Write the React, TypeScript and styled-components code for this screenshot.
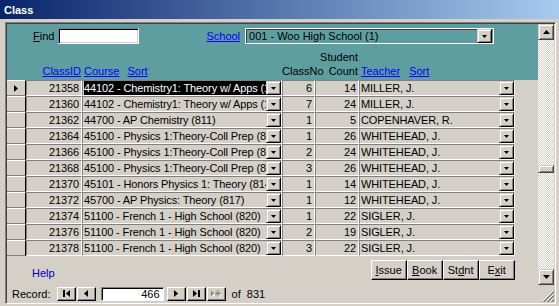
import React from 'react';
import styled, { createGlobalStyle } from 'styled-components';

const FACE = '#D4D0C8';
const SHADOW = '#808080';
const DARK = '#404040';
const TEAL = '#5F9EA0';
const LINK = '#0000FF';

const Global = createGlobalStyle`
  html, body { margin: 0; padding: 0; background: ${FACE}; }
  body { font-family: "Liberation Sans", Arial, sans-serif; font-size: 11px; color: #000; }
  * { box-sizing: border-box; }
`;

const Window = styled.div`
  width: 559px;
  height: 306px;
  background: ${FACE};
  display: flex;
  flex-direction: column;
  padding: 0 3px 2px 3px;
  overflow: hidden;
`;

const TitleBar = styled.div`
  height: 19px;
  background: linear-gradient(to right, #0A246A, #A6CAF0);
  color: #fff;
  font-weight: bold;
  font-size: 11px;
  display: flex;
  align-items: center;
  padding-left: 4px;
  margin: 0 -3px 0 -3px;
`;

const Client = styled.div`
  margin-top: 3px;
  margin-left: 2px;
  flex: 1;
  display: flex;
  flex-direction: column;
  border-top: 1px solid ${SHADOW};
  border-left: 1px solid ${SHADOW};
  border-bottom: 1px solid #fff;
  border-right: 1px solid #fff;
  box-shadow: inset 1px 1px 0 ${DARK}, inset -1px -1px 0 ${FACE};
  padding: 1px;
`;

const Main = styled.div`
  display: flex;
  height: 261px;
`;

const Form = styled.div`
  width: 531px;
  display: flex;
  flex-direction: column;
`;

const Header = styled.div`
  height: 56px;
  background: ${TEAL};
  display: flex;
  flex-direction: column;
`;

const TopRow = styled.div`
  display: flex;
  align-items: center;
  height: 16px;
  margin-top: 4px;
`;

const Label = styled.span<{ $ml?: number }>`
  margin-left: ${p => p.$ml ?? 0}px;
  white-space: nowrap;
`;

const Link = styled.span<{ $ml?: number }>`
  color: ${LINK};
  text-decoration: underline;
  margin-left: ${p => p.$ml ?? 0}px;
  white-space: nowrap;
`;

const FindBox = styled.div`
  width: 81px;
  height: 16px;
  margin-left: 4px;
  background: #fff;
  border-top: 1px solid ${SHADOW};
  border-left: 1px solid ${SHADOW};
  border-bottom: 1px solid #fff;
  border-right: 1px solid #fff;
  box-shadow: inset 1px 1px 0 #000, inset -1px -1px 0 ${FACE};
`;

const SchoolCombo = styled.div`
  width: 249px;
  height: 16px;
  margin-left: 5px;
  border: 1px solid #fff;
  box-shadow: inset 1px 1px 0 ${DARK};
  display: flex;
  align-items: center;
  padding: 0 1px 0 3px;
  white-space: nowrap;
`;

const ComboText = styled.span`
  flex: 1;
  overflow: hidden;
`;

const COLS = '19px 56px 200px 33px 44px 156px';

const LabelRow = styled.div`
  display: grid;
  grid-template-columns: ${COLS};
  align-items: end;
  margin-top: auto;
  padding-bottom: 2px;
  line-height: 14px;
`;

const HeadCell = styled.div<{ $right?: boolean; $gap?: number }>`
  display: flex;
  justify-content: ${p => (p.$right ? 'flex-end' : 'flex-start')};
  text-align: ${p => (p.$right ? 'right' : 'left')};
  gap: ${p => p.$gap ?? 0}px;
  padding: ${p => (p.$right ? '0 1px 0 0' : '0 0 0 2px')};
  white-space: nowrap;
`;

const ClassNoHead = styled(HeadCell)`
  direction: rtl;
  overflow: visible;
`;

const Detail = styled.div`
  display: flex;
  flex-direction: column;
`;

const Row = styled.div`
  display: grid;
  grid-template-columns: ${COLS};
  height: 16px;
  letter-spacing: -0.12px;
`;

const Selector = styled.div`
  height: 16px;
  background: ${FACE};
  border-top: 1px solid #fff;
  border-right: 1px solid #000;
  border-bottom: 1px solid ${SHADOW};
  display: flex;
  align-items: center;
  justify-content: center;
`;

const Cell = styled.div<{ $right?: boolean }>`
  height: 16px;
  background: ${FACE};
  border-top: 1px solid ${SHADOW};
  border-left: 1px solid ${SHADOW};
  border-bottom: 1px solid #fff;
  border-right: 1px solid #fff;
  display: flex;
  align-items: center;
  justify-content: ${p => (p.$right ? 'flex-end' : 'flex-start')};
  padding: ${p => (p.$right ? '0 2px 0 0' : '0 0 0 1px')};
  white-space: nowrap;
  overflow: hidden;
`;

const CellText = styled.span<{ $sel?: boolean }>`
  flex: 1;
  overflow: hidden;
  height: 14px;
  line-height: 14px;
  background: ${p => (p.$sel ? '#000' : 'transparent')};
  color: ${p => (p.$sel ? '#fff' : '#000')};
`;

const DropBtn = styled.div`
  width: 15px;
  height: 14px;
  flex: none;
  background: ${FACE};
  border-top: 1px solid ${FACE};
  border-left: 1px solid ${FACE};
  border-bottom: 1px solid #000;
  border-right: 1px solid #000;
  box-shadow: inset 1px 1px 0 #fff, inset -1px -1px 0 ${SHADOW};
  display: flex;
  align-items: center;
  justify-content: center;
`;

const Footer = styled.div`
  flex: 1;
  display: flex;
  align-items: flex-start;
`;

const Help = styled.span`
  color: #0000C0;
  margin: 11px 0 0 25px;
`;

const Buttons = styled.div`
  display: flex;
  margin: 4px 0 0 316px;
`;

const Btn = styled.div`
  width: 36px;
  height: 20px;
  background: ${FACE};
  border-top: 1px solid #fff;
  border-left: 1px solid #fff;
  border-bottom: 1px solid #000;
  border-right: 1px solid #000;
  box-shadow: inset -1px -1px 0 ${SHADOW};
  display: flex;
  align-items: center;
  justify-content: center;
  white-space: nowrap;
`;

const U = styled.span`
  text-decoration: underline;
`;

const VScroll = styled.div`
  width: 16px;
  display: flex;
  flex-direction: column;
  background-color: #fff;
  background-image: repeating-conic-gradient(${FACE} 0% 25%, #fff 0% 50%);
  background-size: 2px 2px;
`;

const ScrollBtn = styled.div`
  width: 16px;
  height: 16px;
  flex: none;
  background: ${FACE};
  border-top: 1px solid ${FACE};
  border-left: 1px solid ${FACE};
  border-bottom: 1px solid ${DARK};
  border-right: 1px solid ${DARK};
  box-shadow: inset 1px 1px 0 #fff, inset -1px -1px 0 ${SHADOW};
  display: flex;
  align-items: center;
  justify-content: center;
`;

const Thumb = styled.div`
  width: 16px;
  height: 8px;
  margin-top: 125px;
  margin-bottom: auto;
  background: ${FACE};
  border-top: 1px solid ${FACE};
  border-left: 1px solid ${FACE};
  border-bottom: 1px solid ${DARK};
  border-right: 1px solid ${DARK};
  box-shadow: inset 1px 1px 0 #fff, inset -1px -1px 0 ${SHADOW};
`;

const RecordBar = styled.div`
  height: 17px;
  display: flex;
  align-items: center;
  padding-left: 5px;
`;

const NavBtn = styled.div<{ $ml?: number }>`
  width: 19px;
  height: 14px;
  margin-left: ${p => p.$ml ?? 0}px;
  background: ${FACE};
  border-top: 1px solid #fff;
  border-left: 1px solid #fff;
  border-bottom: 1px solid #000;
  border-right: 1px solid #000;
  box-shadow: inset -1px -1px 0 ${SHADOW};
  display: flex;
  align-items: center;
  justify-content: center;
`;

const NavBox = styled.div`
  width: 63px;
  height: 14px;
  margin: 0 3px 0 5px;
  background: #fff;
  border-top: 1px solid ${SHADOW};
  border-left: 1px solid ${SHADOW};
  border-bottom: 1px solid #fff;
  border-right: 1px solid #fff;
  box-shadow: inset 1px 1px 0 #000;
  display: flex;
  align-items: center;
  justify-content: flex-end;
  padding-right: 3px;
`;

const Grip = styled.div`
  margin-left: auto;
  width: 16px;
  height: 17px;
  display: flex;
  align-items: flex-end;
  justify-content: flex-end;
`;

const Down = () => (
  <svg width="5" height="3" viewBox="0 0 5 3"><path d="M0 0h5L2.5 3z" fill="#000" /></svg>
);

const Arrow = ({ dir, color = '#000' }: { dir: 'up' | 'down' | 'left' | 'right'; color?: string }) => {
  const d = {
    up: 'M3.5 0L7 4H0z',
    down: 'M0 0h7L3.5 4z',
    left: 'M0 3.5L4 0v7z',
    right: 'M4 3.5L0 0v7z',
  }[dir];
  const vert = dir === 'up' || dir === 'down';
  const [w, h] = vert ? [7, 4] : [4, 7];
  return (
    <svg width={w} height={h} viewBox={`0 0 ${w} ${h}`}><path d={d} fill={color} /></svg>
  );
};

const First = () => (
  <svg width="7" height="7" viewBox="0 0 7 7"><rect x="0" y="0" width="2" height="7" fill="#000" /><path d="M3 3.5L7 0v7z" fill="#000" /></svg>
);
const Last = () => (
  <svg width="7" height="7" viewBox="0 0 7 7"><path d="M4 3.5L0 0v7z" fill="#000" /><rect x="5" y="0" width="2" height="7" fill="#000" /></svg>
);
const NewRec = () => (
  <svg width="11" height="8" viewBox="0 0 11 8">
    <path d="M4 4.5L1 1.5v6z" fill="#fff" />
    <path d="M3 3.5L0 0.5v6z" fill="#808080" />
    <g stroke="#fff" strokeWidth="1"><path d="M8 1v7M5 4.5h6M6 2.5l4 4M10 2.5l-4 4" /></g>
    <g stroke="#808080" strokeWidth="1"><path d="M7 0v7M4 3.5h6M5 1.5l4 4M9 1.5l-4 4" /></g>
  </svg>
);

const GripIcon = () => (
  <svg width="12" height="12" viewBox="0 0 12 12">
    <g strokeWidth="1">
      <path d="M11 1L1 11" stroke="#fff" />
      <path d="M12 1L1 12M12 2L2 12" stroke="#808080" />
      <path d="M11 5L5 11" stroke="#fff" />
      <path d="M12 5L5 12M12 6L6 12" stroke="#808080" />
      <path d="M11 9L9 11" stroke="#fff" />
      <path d="M12 9L9 12M12 10L10 12" stroke="#808080" />
    </g>
  </svg>
);

type Rec = { id: number; course: string; no: number; count: number; teacher: string };

const rows: Rec[] = [
  { id: 21358, course: '44102 - Chemistry1: Theory w/ Apps (1', no: 6, count: 14, teacher: 'MILLER, J.' },
  { id: 21360, course: '44102 - Chemistry1: Theory w/ Apps (1', no: 7, count: 24, teacher: 'MILLER, J.' },
  { id: 21362, course: '44700 - AP Chemistry (811)', no: 1, count: 5, teacher: 'COPENHAVER, R.' },
  { id: 21364, course: '45100 - Physics 1:Theory-Coll Prep (813)', no: 1, count: 26, teacher: 'WHITEHEAD, J.' },
  { id: 21366, course: '45100 - Physics 1:Theory-Coll Prep (813)', no: 2, count: 24, teacher: 'WHITEHEAD, J.' },
  { id: 21368, course: '45100 - Physics 1:Theory-Coll Prep (813)', no: 3, count: 26, teacher: 'WHITEHEAD, J.' },
  { id: 21370, course: '45101 - Honors Physics 1:  Theory (814)', no: 1, count: 14, teacher: 'WHITEHEAD, J.' },
  { id: 21372, course: '45700 - AP Physics: Theory (817)', no: 1, count: 12, teacher: 'WHITEHEAD, J.' },
  { id: 21374, course: '51100 - French 1 - High School (820)', no: 1, count: 22, teacher: 'SIGLER, J.' },
  { id: 21376, course: '51100 - French 1 - High School (820)', no: 2, count: 19, teacher: 'SIGLER, J.' },
  { id: 21378, course: '51100 - French 1 - High School (820)', no: 3, count: 22, teacher: 'SIGLER, J.' },
];

export default function App() {
  return (
    <>
      <Global />
      <Window>
        <TitleBar>Class</TitleBar>
        <Client>
          <Main>
            <Form>
              <Header>
                <TopRow>
                  <Label $ml={26}><U>F</U>ind</Label>
                  <FindBox />
                  <Link $ml={67}>School</Link>
                  <SchoolCombo>
                    <ComboText>001 - Woo High School (1)</ComboText>
                    <DropBtn><Down /></DropBtn>
                  </SchoolCombo>
                </TopRow>
                <LabelRow>
                  <div />
                  <HeadCell $right><Link>ClassID</Link></HeadCell>
                  <HeadCell $gap={8}><Link>Course</Link><Link>Sort</Link></HeadCell>
                  <ClassNoHead $right><span>ClassNo</span></ClassNoHead>
                  <HeadCell $right><span>Student<br />Count</span></HeadCell>
                  <HeadCell $gap={9}><Link>Teacher</Link><Link>Sort</Link></HeadCell>
                </LabelRow>
              </Header>
              <Detail>
                {rows.map((r, i) => (
                  <Row key={r.id}>
                    <Selector>{i === 0 && <Arrow dir="right" />}</Selector>
                    <Cell $right>{r.id}</Cell>
                    <Cell>
                      <CellText $sel={i === 0}>{r.course}</CellText>
                      <DropBtn><Down /></DropBtn>
                    </Cell>
                    <Cell $right>{r.no}</Cell>
                    <Cell $right>{r.count}</Cell>
                    <Cell>
                      <CellText>{r.teacher}</CellText>
                      <DropBtn><Down /></DropBtn>
                    </Cell>
                  </Row>
                ))}
              </Detail>
              <Footer>
                <Help>Help</Help>
                <Buttons>
                  <Btn><span><U>I</U>ssue</span></Btn>
                  <Btn><span><U>B</U>ook</span></Btn>
                  <Btn><span>St<U>d</U>nt</span></Btn>
                  <Btn><span>E<U>x</U>it</span></Btn>
                </Buttons>
              </Footer>
            </Form>
            <VScroll>
              <ScrollBtn><Arrow dir="up" /></ScrollBtn>
              <Thumb />
              <ScrollBtn><Arrow dir="down" /></ScrollBtn>
            </VScroll>
          </Main>
          <RecordBar>
            <Label>Record:</Label>
            <NavBtn $ml={6}><First /></NavBtn>
            <NavBtn $ml={1}><Arrow dir="left" /></NavBtn>
            <NavBox>466</NavBox>
            <NavBtn><Arrow dir="right" /></NavBtn>
            <NavBtn $ml={1}><Last /></NavBtn>
            <NavBtn $ml={1}><NewRec /></NavBtn>
            <Label $ml={6}>of&nbsp;&nbsp;831</Label>
            <Grip><GripIcon /></Grip>
          </RecordBar>
        </Client>
      </Window>
    </>
  );
}
